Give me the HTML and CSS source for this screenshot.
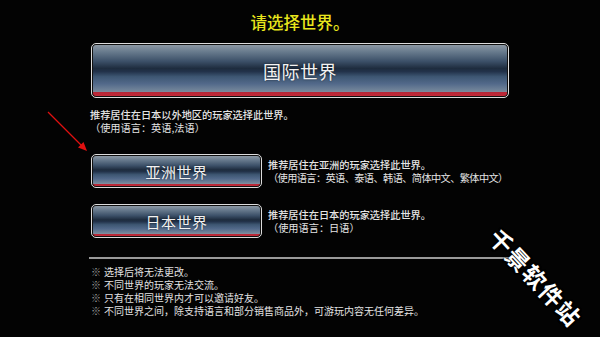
FILE: index.html
```html
<!DOCTYPE html>
<html lang="zh-CN">
<head>
<meta charset="utf-8">
<title>请选择世界</title>
<link rel="stylesheet" href="styles.css">
</head>
<body>
<div class="page">
  <h1 class="title">请选择世界。</h1>

  <div class="btn btn-big"><div class="btn-inner">国际世界</div></div>
  <div class="desc desc-main">
    <div class="desc-lead">推荐居住在日本以外地区的玩家选择此世界。</div>
    <div>（使用语言：英语,法语）</div>
  </div>

  <div class="row row-asia">
    <div class="btn btn-small"><div class="btn-inner">亚洲世界</div></div>
    <div class="desc">
      <div class="desc-lead">推荐居住在亚洲的玩家选择此世界。</div>
      <div class="tight">（使用语言：英语、泰语、韩语、简体中文、繁体中文）</div>
    </div>
  </div>

  <div class="row row-japan">
    <div class="btn btn-small"><div class="btn-inner">日本世界</div></div>
    <div class="desc">
      <div class="desc-lead">推荐居住在日本的玩家选择此世界。</div>
      <div>（使用语言：日语）</div>
    </div>
  </div>

  <div class="divider"></div>

  <ul class="notes">
    <li><span class="mark">※</span>选择后将无法更改。</li>
    <li><span class="mark">※</span>不同世界的玩家无法交流。</li>
    <li><span class="mark">※</span>只有在相同世界内才可以邀请好友。</li>
    <li><span class="mark">※</span>不同世界之间，除支持语言和部分销售商品外，可游玩内容无任何差异。</li>
  </ul>
</div>

<svg class="arrow" width="50" height="50" viewBox="0 0 50 50">
  <line x1="2" y1="2" x2="37" y2="37" stroke="#e01010" stroke-width="1.2"/>
  <polygon points="41,41 32,37.5 37.5,32" fill="#e01010"/>
</svg>

<div class="watermark">千景软件站</div>
</body>
</html>
```

FILE: styles.css
```css
html, body {
  margin: 0;
  padding: 0;
  background: #030303;
}

body {
  width: 600px;
  height: 337px;
  overflow: hidden;
  position: relative;
  font-family: "Noto Sans CJK SC", "Noto Sans", "DejaVu Sans", sans-serif;
  color: #e6e6e6;
}

.page {
  padding: 12px 91px 0 91px;
  display: flex;
  flex-direction: column;
}

.title {
  margin: 0;
  font-size: 16.5px;
  line-height: 20px;
  font-weight: 500;
  color: #e9e61c;
  text-align: center;
}

.btn {
  box-sizing: border-box;
  border: 1.5px solid #dcdcdc;
  border-radius: 5px;
  padding: 1px;
  background: #101010;
}

.btn-inner {
  box-sizing: border-box;
  height: 100%;
  border-radius: 3px;
  display: flex;
  align-items: center;
  justify-content: center;
  color: #f2f2f2;
  text-shadow: 0 0 2px rgba(0, 0, 0, 0.6);
  background: linear-gradient(to bottom,
    #8c98a4 0%,
    #66798c 14%,
    #3c5068 32%,
    #1e2c3e 46%,
    #22324a 52%,
    #3d5672 62%,
    #52698a 76%,
    #6f8298 88%,
    #7e8c9c 92%,
    #b52636 92%,
    #c22a38 100%);
}

.btn-big {
  margin-top: 11px;
  height: 55px;
}

.btn-big .btn-inner {
  font-size: 18px;
  letter-spacing: 0.5px;
}

.btn-small {
  flex: 0 0 171px;
  height: 34px;
}

.btn-small .btn-inner {
  font-size: 15px;
  letter-spacing: 0.5px;
}

.desc {
  font-size: 10.2px;
  line-height: 13px;
  color: #e4e4e4;
  white-space: nowrap;
}

.desc-lead {
  font-weight: 500;
}

.tight {
  letter-spacing: -0.6px;
}

.desc-main {
  margin-top: 10px;
  margin-left: -1px;
}

.row {
  display: flex;
  align-items: center;
  gap: 6px;
}

.row-asia {
  margin-top: 20px;
}

.row-japan {
  margin-top: 16px;
}

.divider {
  margin-top: 19px;
  margin-left: -2px;
  height: 2px;
  background: #9a9a9a;
}

.notes {
  list-style: none;
  margin: 6px 0 0 0;
  padding: 0;
  font-size: 10px;
  line-height: 13px;
  color: #e2e2e2;
}

.notes li {
  height: 13px;
}

.mark {
  color: #9c9c9c;
  margin-right: 3px;
}

.arrow {
  position: absolute;
  left: 46px;
  top: 110px;
}

.watermark {
  position: absolute;
  left: 474px;
  top: 264px;
  width: 124px;
  text-align: center;
  font-size: 23px;
  line-height: 26px;
  font-weight: 700;
  letter-spacing: 1.5px;
  color: #ffffff;
  transform: rotate(47deg);
  text-shadow: 0 0 2px #000, 0 0 2px #000, 1px 1px 1px #000;
}
```
